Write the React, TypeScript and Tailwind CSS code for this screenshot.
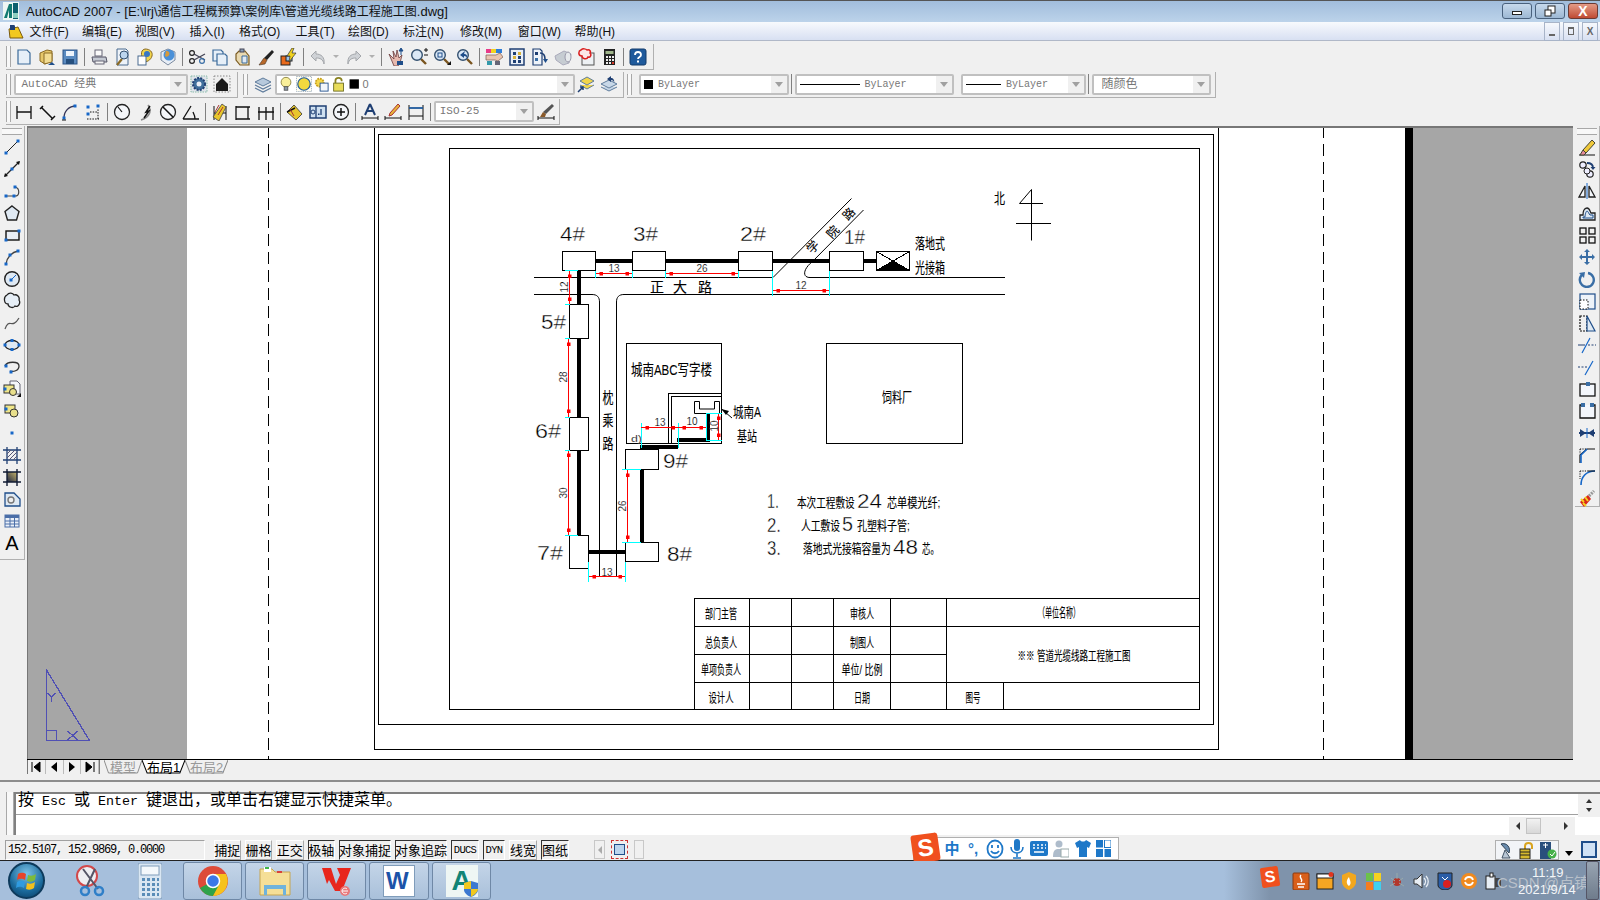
import React from "react";

type IconProps = { children: React.ReactNode; size?: number };

const Ico = ({ children, size = 18 }: IconProps) => (
  <svg width={size} height={size} viewBox="0 0 18 18" fill="none">
    {children}
  </svg>
);

const P = ({ x, y }: { x: number; y: number }) => (
  <rect x={x - 1.5} y={y - 1.5} width="3" height="3" fill="#1667c8" />
);

const NAVY = "#1f3f73";
const PALE = "#dfe9f3";

// left draw toolbar
const drawIcons: React.ReactNode[] = [
  <><path d="M3 15 15 3" stroke="#222" /><P x={3} y={15} /><P x={15} y={3} /></>,
  <><path d="M2 16 16 2" stroke="#222" strokeWidth="1.3" /><path d="M1 17l1-4 3 3zM17 1l-1 4-3-3z" fill="#111" /><P x={9} y={9} /></>,
  <><path d="M3 14h9c5 0 5-8 0-9" stroke="#444" strokeWidth="1.2" /><P x={3} y={14} /><P x={11} y={14} /><P x={12} y={5} /></>,
  <path d="M9 2l7 5.5-2.5 8.5h-9L2 7.5z" fill={PALE} stroke="#222" strokeWidth="1.4" />,
  <><rect x="3" y="5" width="13" height="9" fill="#e8eef6" stroke="#111" strokeWidth="1.4" /><P x={3} y={14} /><P x={16} y={5} /></>,
  <><path d="M3 16C4 9 9 4 15 3" stroke="#444" strokeWidth="1.3" /><P x={3} y={16} /><P x={15} y={3} /><P x={7} y={7} /></>,
  <><circle cx="9" cy="9" r="7.3" fill={PALE} stroke="#222" strokeWidth="1.4" /><path d="M9 9l4-4" stroke="#1667c8" /><P x={8} y={10} /></>,
  <path d="M4 3c2-3 6-2 7 0 3-1 6 2 5 5 2 3-1 8-4 6-2 3-7 1-7-2-4 0-5-7-1-9z" fill="#e6eef6" stroke="#222" strokeWidth="1.3" />,
  <path d="M2 15C6 3 9 16 16 4" stroke="#555" strokeWidth="1.2" />,
  <><ellipse cx="9" cy="9" rx="7" ry="4.5" fill={PALE} stroke="#222" strokeWidth="1.3" /><P x={9} y={4.5} /><P x={9} y={13.5} /><P x={2} y={9} /><P x={16} y={9} /></>,
  <><path d="M2 8C4 3 16 3 16 8c0 5-6 6-9 5" stroke="#333" strokeWidth="1.3" /><P x={3} y={8} /><P x={8} y={14} /></>,
  <><path d="M7 1h7l3 3v10H7z" fill="#f4f6fa" stroke="#667" /><rect x="1" y="5" width="10" height="8" fill="#efe68a" stroke="#333" /><circle cx="10" cy="12" r="3.5" fill="#e8df8c" stroke="#333" /><P x={2} y={9} /><path d="M14 17l4-4v4z" fill="#111" /></>,
  <><rect x="2" y="3" width="10" height="8" fill="#efe68a" stroke="#333" /><circle cx="11" cy="11" r="4" fill="#e8df8c" stroke="#333" /><P x={3} y={7} /></>,
  <rect x="7.5" y="7.5" width="3" height="3" fill="#1667c8" />,
  <><path d="M4 1v17M14 1v17M0 4h18M0 14h18" stroke={NAVY} strokeWidth="1.3" /><path d="M4 8l4-4M4 12l8-8M6 14l8-8M10 14l4-4" stroke="#557" /></>,
  <><defs><linearGradient id="g1" x1="0" y1="1" x2="1" y2="0"><stop stopColor="#1b2340" /><stop offset="1" stopColor="#c9b66a" /></linearGradient></defs><rect x="4" y="4" width="10" height="10" fill="url(#g1)" /><path d="M4 1v17M14 1v17M0 4h18M0 14h18" stroke="#111b33" strokeWidth="1.4" /></>,
  <><path d="M2 3h9l6 6v7H2z" fill={PALE} stroke="#1f4e8a" strokeWidth="1.3" /><circle cx="8" cy="10" r="3" fill="#eee" stroke="#777" strokeWidth="1.4" /></>,
  <><rect x="2" y="3" width="14" height="12" fill="#eaf0f9" stroke="#4a6ea8" /><rect x="2" y="3" width="14" height="3" fill="#4a6ea8" /><path d="M2 9h14M2 12h14M7 6v9M11.5 6v9" stroke="#4a6ea8" /></>,
  <span />,
];

// right modify toolbar
const modifyIcons: React.ReactNode[] = [
  <><path d="M1 17h16" stroke="#111" /><path d="M5 12 14 2l3 3-9 10z" fill="#f0c93a" stroke="#443" /><path d="M5 12l3 3-2 2H2z" fill="#e58a9a" stroke="#443" /></>,
  <><circle cx="5" cy="5" r="3.2" fill="#eef" stroke="#222" strokeWidth="1.2" /><circle cx="12" cy="14" r="3.2" fill="#eef" stroke="#222" strokeWidth="1.2" /><circle cx="9" cy="11" r="3" fill="#eef" stroke="#222" /><path d="M9 3c4 0 6 2 6 5" stroke={NAVY} strokeWidth="1.8" /><path d="M12.5 7l2.5 3 2.5-3z" fill={NAVY} /></>,
  <><path d="M9 1v16" stroke="#1667c8" /><path d="M7 4v11H1zM11 4v11h6z" fill="#f4f7fb" stroke="#222" strokeWidth="1.3" /></>,
  <><path d="M2 16V11h3c0-3 1-7 4-7s3 4 4 5h4v7z" fill={PALE} stroke="#222" strokeWidth="1.3" /><path d="M5 14v-1h2c0-2 1-6 2-6s2 3 3 4h3v3z" stroke="#1f4e8a" /></>,
  <><rect x="2" y="2" width="6" height="6" stroke="#111" strokeWidth="1.3" /><rect x="11" y="2" width="6" height="6" stroke="#111" strokeWidth="1.3" /><rect x="2" y="11" width="6" height="6" stroke="#111" strokeWidth="1.3" /><rect x="11" y="11" width="6" height="6" stroke="#111" strokeWidth="1.3" /></>,
  <path d="M9 1l3 3h-2v4h4V6l3 3-3 3v-2h-4v4h2l-3 3-3-3h2v-4H4v2L1 9l3-3v2h4V4H6z" fill="#3a6ea5" />,
  <><path d="M5 4a7 7 0 1 0 5-1" stroke="#3a6ea5" strokeWidth="2.4" /><path d="M1 3l6-1-1 6z" fill="#3a6ea5" /></>,
  <><rect x="2" y="2" width="15" height="15" fill="#eef3f9" stroke="#1f4e8a" strokeWidth="1.2" /><rect x="2" y="8" width="8" height="9" fill="#fff" stroke="#111" strokeDasharray="1.5 1.5" /></>,
  <><rect x="2" y="2" width="7" height="15" stroke="#111" strokeWidth="1.2" strokeDasharray="2 1" /><path d="M9 2l8 15H9z" fill={PALE} stroke="#1f4e8a" strokeWidth="1.2" /></>,
  <><path d="M4 17 12 2" stroke="#1667c8" strokeWidth="1.2" /><path d="M0 9h7" stroke={NAVY} /><path d="M10 9h8" stroke={NAVY} strokeDasharray="2 1.5" /></>,
  <><path d="M7 17 15 3" stroke="#1667c8" strokeWidth="1.2" /><path d="M0 9h10" stroke={NAVY} strokeDasharray="2 1.5" /></>,
  <><rect x="2" y="4" width="15" height="12" fill="#f3f6fb" stroke="#111" strokeWidth="1.3" /><rect x="8" y="2" width="4" height="4" fill="#3a6ea5" /></>,
  <><path d="M5 3H2v13h15V3h-3" fill="#f3f6fb" stroke="#111" strokeWidth="1.3" /><rect x="3" y="1" width="4" height="4" fill="#3a6ea5" /><rect x="12" y="1" width="4" height="4" fill="#3a6ea5" /></>,
  <><path d="M1 9h16" stroke="#1f3f73" strokeWidth="2" /><path d="M2 5l6 4-6 4zM16 5l-6 4 6 4z" fill="#1f3f73" /><path d="M9 4v10" stroke="#1667c8" /></>,
  <><path d="M2 17V9l7-6h8" stroke="#111" strokeWidth="1.2" /><path d="M3 17V9l6-6" stroke="#1667c8" strokeWidth="1.6" /><path d="M2 3h6M2 3v5" stroke="#111" strokeDasharray="1.2 1.2" /></>,
  <><path d="M3 17C3 9 8 3 17 3" stroke="#1667c8" strokeWidth="1.6" /><path d="M2 3h8M2 3v8" stroke="#111" strokeDasharray="1.2 1.2" /><path d="M10 3h7" stroke="#111" /></>,
  <><path d="M10 5 2 12l4 5 7-8z" fill="#d9261c" /><path d="M3 9l3 3M7 7l3 4M5 13l3 3" stroke="#f5d020" strokeWidth="2" /><path d="M11 6l5-5" stroke="#999" strokeWidth="3" strokeDasharray="2 1" /></>,
];

const Mag = ({ children }: { children?: React.ReactNode }) => (
  <>
    <path d="M11 11l5 5" stroke="#7a5520" strokeWidth="2.4" />
    <circle cx="7" cy="7" r="5.3" fill="#dbe8f6" stroke="#33506f" strokeWidth="1.4" />
    {children}
  </>
);

const Dim = ({ children }: { children: React.ReactNode }) => (
  <g stroke="#111" strokeWidth="1.3">{children}</g>
);

const std: Record<string, React.ReactNode> = {
  qnew: <path d="M3 2h9l3 3v11H3z" fill="#e6eff8" stroke="#3b6a9a" strokeWidth="1.2" />,
  open: <><path d="M2 5l7-3 5 1v10l-7 3-5-3z" fill="#e6c76a" stroke="#8a6a25" /><path d="M6 5h8v9l-8 2z" fill="#f2dc92" stroke="#8a6a25" /><path d="M10 17l4-3 3 3z" fill="#1f4e8a" /></>,
  save: <><rect x="2" y="2" width="14" height="14" fill="#5b8bc0" stroke="#2c5588" /><rect x="5" y="3" width="8" height="5" fill="#eef4fb" /><rect x="5" y="11" width="8" height="5" fill="#26507f" /></>,
  print: <><rect x="5" y="2" width="7" height="6" fill="#fafafa" stroke="#667" /><path d="M2 9h14l1 5H3z" fill="#c4c9d2" stroke="#556" /><rect x="5" y="13" width="9" height="3" fill="#f4f4f4" stroke="#667" /></>,
  preview: <><path d="M4 1h9l2 2v14H4z" fill="#eef3f9" stroke="#4a6b8f" /><path d="M9 11l-5 6" stroke="#8a6a25" strokeWidth="2.2" /><circle cx="11" cy="7" r="4" fill="#bcd5ee" stroke="#33506f" /></>,
  publish: <><path d="M9 1c5 0 8 3 7 7s-6 7-8 5S3 2 9 1z" fill="#f1d54b" stroke="#8a6a25" /><rect x="2" y="8" width="8" height="9" fill="#fff" stroke="#4a6b8f" /><circle cx="11" cy="6" r="3" fill="#3877c2" /></>,
  dwf: <><path d="M2 4l7-3 7 3v8l-7 5-7-5z" fill="#e8eef6" stroke="#7a8aa0" /><circle cx="10" cy="7" r="5.5" fill="#4a90d8" /><path d="M7 3c3 0 4 2 3 4s-3 2-4 1z" fill="#d89a3a" /></>,
  cut: <><circle cx="4" cy="5" r="2.4" stroke="#222" strokeWidth="1.2" /><circle cx="4" cy="13" r="2.4" stroke="#222" strokeWidth="1.2" /><path d="M6 6l11 6M6 12l11-6" stroke="#445" strokeWidth="1.3" /><circle cx="14" cy="13" r="2.4" stroke="#3a6ea5" strokeWidth="1.2" /></>,
  copy: <><path d="M2 2h8l2 2v9H2z" fill="#e6eff8" stroke="#3b6a9a" strokeWidth="1.2" /><path d="M6 6h8l2 2v9H6z" fill="#e6eff8" stroke="#3b6a9a" strokeWidth="1.2" /></>,
  paste: <><path d="M5 3h6l4 5v9H6L2 12V6z" fill="#e9d9b0" stroke="#7a5a20" strokeWidth="1.2" /><rect x="6" y="1" width="4" height="3" fill="#8aa0b8" stroke="#445" /><path d="M8 8h5v7H8z" fill="#dfe9f3" stroke="#3b6a9a" /></>,
  match: <><path d="M15 2l2 2-7 8-3-2z" fill="#222" /><path d="M7 10l3 2-2 4-6 1c2-2 3-5 5-7z" fill="#b8682a" stroke="#432" strokeWidth=".6" /></>,
  block: <><rect x="1" y="8" width="9" height="9" fill="#e86a1c" stroke="#222" /><rect x="6" y="8" width="6" height="5" fill="#9cc3ea" stroke="#222" /><path d="M12 0 7 8h3l-1 6 7-9h-4l2-5z" fill="#f2d21e" stroke="#333" strokeWidth=".7" /></>,
  undo: <path d="M7 3 2 8l5 5v-3c4 0 7 1 8 6 1-7-3-10-8-10z" fill="#cfd2d6" stroke="#a4a7ab" />,
  redo: <path d="M11 3l5 5-5 5v-3c-4 0-7 1-8 6-1-7 3-10 8-10z" fill="#cfd2d6" stroke="#a4a7ab" />,
  pan: <><path d="M2 6l5 5-1-8 3 6 1-7 2 8 3-3-2 8-2 3H7z" fill="#e6b9ae" stroke="#6a3a3a" strokeWidth=".8" /><path d="M14 0l-2 3h4zM14 3v4" stroke="#1f4e8a" fill="#1f4e8a" /><rect x="10" y="13" width="6" height="4" fill="#1f4e8a" /></>,
  zoomr: <Mag><path d="M14 2h4M16 0v4M14 7h4" stroke="#111" /></Mag>,
  zoomw: <Mag><rect x="5" y="5" width="4" height="4" stroke="#1f4e8a" /><path d="M14 17l4-4v4z" fill="#111" /></Mag>,
  zoomp: <Mag><path d="M9 3 4 7l4 3V8c2 0 3 1 3 3 1-4-1-5-3-5z" fill="#1f4e8a" /></Mag>,
  props: <><path d="M1 1h5v4H1z" fill="#e83a8a" /><path d="M6 1h5v4H6z" fill="#f2d21e" /><path d="M11 1h6v4h-6z" fill="#2f7ed8" /><path d="M1 7h10l4-2 3 4-5 4-3-1H1z" fill="#e8c4b0" stroke="#7a5a50" strokeWidth=".7" /><rect x="2" y="13" width="5" height="4" fill="#39a" /><rect x="10" y="13" width="5" height="4" fill="#667" /></>,
  design: <><rect x="2" y="1" width="14" height="16" fill="#e9eff7" stroke={NAVY} strokeWidth="1.5" /><rect x="5" y="4" width="3" height="3" fill={NAVY} /><rect x="10" y="4" width="3" height="3" fill="#d9b43a" /><rect x="5" y="8" width="3" height="3" fill="#d9b43a" /><rect x="10" y="8" width="3" height="3" fill={NAVY} /><rect x="5" y="12" width="3" height="3" fill={NAVY} /><rect x="10" y="12" width="3" height="3" fill={NAVY} /></>,
  palette: <><path d="M2 1h7l2 2v14H2z" fill="#eef3f9" stroke={NAVY} strokeWidth="1.2" /><rect x="4" y="4" width="3" height="3" fill={NAVY} /><rect x="4" y="10" width="3" height="3" fill="#3a6ea5" /><path d="M9 5c4 0 5 3 5 6" stroke={NAVY} strokeWidth="1.6" /><path d="M12 11h5l-2.5 4z" fill="#1f4e8a" /></>,
  sheet: <><path d="M1 8l9-5 7 3-2 9-6 2-7-5z" fill="#c6ccd2" stroke="#aab" /><ellipse cx="14" cy="9" rx="3" ry="5" fill="#e6e9ec" stroke="#99a" /></>,
  markup: <><rect x="5" y="5" width="12" height="12" fill="#eef1f4" stroke="#555" /><path d="M4 2c2-2 5-1 6 0 3-1 4 2 3 3 2 2 0 5-2 4-1 3-6 2-6-1-4 0-4-5-1-6z" fill="#fbe7e7" stroke="#d92020" strokeWidth="1.5" /></>,
  calc: <><rect x="4" y="1" width="11" height="16" fill="#222" /><rect x="5.5" y="3" width="8" height="3" fill="#9fb58a" /><path d="M6 8h2v2H6zM9 8h2v2H9zM12 8h2v2h-2zM6 11h2v2H6zM9 11h2v2H9zM12 11h2v2h-2zM6 14h2v2H6zM9 14h2v2H9z" fill="#eee" /><rect x="12" y="14" width="2" height="2" fill="#d63a2a" /></>,
  help: <><rect x="1" y="1" width="16" height="16" rx="2" fill="#1f5a9c" stroke="#123a6b" /><path d="M6 7c0-4 6-4 6 0 0 2-3 2-3 4" stroke="#fff" strokeWidth="1.8" /><rect x="8" y="12.5" width="2" height="2" fill="#fff" /></>,
  gear: <><rect x="1" y="1" width="16" height="16" fill="#e0e4ea" stroke="#8ba" strokeDasharray="1.5 1" /><circle cx="9" cy="9" r="6" fill="#3f6f9c" stroke="#1f3f73" strokeWidth="2" strokeDasharray="2 1.2" /><circle cx="9" cy="9" r="2.5" fill="#e8eef6" /></>,
  house: <><rect x="1" y="1" width="16" height="16" fill="#eee" stroke="#888" strokeDasharray="1.5 1.5" /><path d="M9 3l6 6v7H3V9z" fill="#1a1a1a" /></>,
  layers: <><path d="M1 7l8-4 8 4-8 4z" fill="#b7c9dc" stroke="#5f7c9c" /><path d="M1 10l8 4 8-4M1 13l8 4 8-4" stroke="#5f7c9c" strokeWidth="1.2" /></>,
  bulb: <><circle cx="9" cy="7" r="5.5" fill="#f8ef9a" stroke="#8b8240" /><rect x="7" y="12" width="4" height="4" fill="#8a9aa8" stroke="#555" /></>,
  sun: <><rect x="0.5" y="0.5" width="17" height="17" fill="#fffdf0" stroke="#9ab" strokeDasharray="1.5 1" /><circle cx="9" cy="9" r="7" fill="#f2d93e" stroke="#1f5a9c" strokeWidth="1.3" /></>,
  sun2: <><circle cx="7.5" cy="7.5" r="4.5" fill="#f6d84a" stroke="#c9a21c" strokeDasharray="2 1" strokeWidth="2" /><rect x="8" y="8" width="9" height="9" fill="#f2f6fb" stroke="#1f4e8a" /></>,
  lock: <><path d="M5 9V5c0-4 7-4 7 0v1" stroke="#8a8220" strokeWidth="2" /><rect x="3" y="8" width="11" height="9" fill="#e8dc5a" stroke="#6a6a20" /></>,
  blk: <rect x="2" y="3" width="12" height="12" fill="#000" />,
  layprev: <><path d="M3 6l7-4 7 4-7 4zM3 10l7 4 7-4" fill="#f1d54b" stroke="#5f7c9c" /><path d="M1 17l5-5M3 12h3v3" stroke={NAVY} strokeWidth="1.5" /></>,
  laymat: <><path d="M1 9l8-4 8 4-8 4zM1 12l8 4 8-4" fill="#c8d8e8" stroke="#5f7c9c" /><path d="M11 1 7 4l4 3V5c2 0 3 1 3 3 1-3-1-5-3-5z" fill="#1f3f73" /></>,
  dl: <Dim><path d="M2 3v13M16 3v13M2 9h14" /></Dim>,
  da: <Dim><path d="M2 6 5 3M13 17l4-4M4 5l10 10" strokeWidth="1.5" /></Dim>,
  darc: <><path d="M3 15C3 8 8 3 15 3" stroke="#335" strokeWidth="1.4" /><P x={3} y={15} /><P x={14} y={3} /><path d="M1 17h4" stroke="#111" /></>,
  dord: <><path d="M3 16h12M14 16V6M6 9h8" stroke="#111" strokeDasharray="1.5 1.2" /><P x={4} y={4} /><P x={14} y={3} /><P x={4} y={11} /></>,
  drad: <><circle cx="9" cy="9" r="7.5" fill="#f4f6f9" stroke="#222" strokeWidth="1.3" /><path d="M9 9 5 4" stroke="#111" strokeWidth="1.2" /></>,
  djog: <><path d="M5 17C14 14 16 8 12 2" stroke="#888" strokeWidth="1.5" /><path d="M14 3l-4 6 3-1-5 7" stroke="#111" strokeWidth="1.5" /></>,
  ddia: <><circle cx="9" cy="9" r="7.5" fill="#f4f6f9" stroke="#222" strokeWidth="1.3" /><path d="M4 4l10 10" stroke="#111" strokeWidth="1.5" /></>,
  dang: <Dim><path d="M1 16h16M1 16 9 3M13 16c0-3-1-5-2-7" /></Dim>,
  dqk: <><path d="M3 3v14M15 3v14" stroke="#111" /><path d="M3 10h12" stroke="#111" /><path d="M2 14l9-13 4 3-7 14z" fill="#e8c62c" stroke="#444" strokeWidth=".8" /><path d="M8 2 4 9M12 4l-5 8" stroke="#a33" /></>,
  dbase: <Dim><path d="M2 3v14M2 4h14M2 16h14M14 4v12" /></Dim>,
  dcont: <Dim><path d="M2 4v13M9 4v13M16 4v13M1 9h16" /></Dim>,
  dldr: <><path d="M1 9l9 8 6-6-8-9z" fill="#e8c62c" stroke="#333" strokeWidth=".8" /><path d="M1 9 9 5" stroke="#111" strokeWidth="1.5" /><path d="M4 6l4 7" stroke="#a33" /></>,
  dtol: <><rect x="1" y="3" width="16" height="12" fill="#cfe0f0" stroke={NAVY} strokeWidth="1.5" /><path d="M7 3v12M12 6v6" stroke={NAVY} strokeWidth="1.3" /><circle cx="4" cy="9" r="2" stroke={NAVY} /><rect x="9" y="10.5" width="1.5" height="1.5" fill={NAVY} /></>,
  dcen: <><circle cx="9" cy="9" r="7.5" fill="#f4f6f9" stroke="#222" strokeWidth="1.3" /><path d="M9 5v8M5 9h8" stroke="#111" strokeWidth="1.5" /></>,
  dtxt: <><path d="M9 1 4 12M9 1l5 11M6 8h6" stroke={NAVY} strokeWidth="2" /><path d="M1 13v4M17 13v4M1 15h16" stroke="#111" /></>,
  dedit: <><path d="M1 13v4M17 13v4M1 15h16" stroke="#111" /><path d="M14 1l2 2-8 9-3 1 1-3z" fill="#e8b43a" stroke="#a33" /></>,
  dupd: <><path d="M2 2v15M16 2v15" stroke="#111" /><path d="M2 5h14" stroke="#1f5a9c" strokeWidth="1.8" /><path d="M2 13h14" stroke="#111" /></>,
  dstyle: <><path d="M1 13v4M17 13v4M1 15h16" stroke="#111" /><path d="M15 1l2 2-8 8-3-2z" fill="#555" /><path d="M6 9l3 2-1 3H3z" fill="#8a5a2a" /></>,
};

const ToolBtn = ({ name }: { name: string }) => (
  <div className="flex h-full w-[23px] flex-none items-center justify-center">
    <Ico>{std[name]}</Ico>
  </div>
);

const Sep = () => (
  <div className="flex h-full w-[6px] flex-none items-center justify-center">
    <div className="h-[18px] w-px bg-[#808080]" />
  </div>
);

const Grip = ({ className = "" }: { className?: string }) => (
  <div className={`flex h-full flex-none items-center ${className}`}>
    <div className="h-[21px] w-[5px] border-x border-[#a8a8a8] bg-[#f8f8f8]" />
  </div>
);

const Caret = () => (
  <div className="ml-auto flex h-full w-[16px] flex-none items-center justify-center bg-[#f0f0f0]">
    <div className="h-0 w-0 border-x-[4px] border-t-[5px] border-x-transparent border-t-[#a0a0a0]" />
  </div>
);

const SmallCaret = () => (
  <div className="flex h-full w-[13px] flex-none items-center justify-center">
    <div className="h-0 w-0 border-x-[3px] border-t-[3px] border-x-transparent border-t-[#b0b0b0]" />
  </div>
);

const Combo = ({ className, children }: { className: string; children?: React.ReactNode }) => (
  <div className={`flex h-[21px] flex-none items-center overflow-hidden rounded-[2px] border-2 border-[#c0c0c0] bg-white text-[12px] text-[#777] ${className}`}>
    {children}
    <Caret />
  </div>
);

const Bar = ({ className, children }: { className: string; children: React.ReactNode }) => (
  <div className={`flex h-[26px] flex-none items-center border border-t-0 border-l-0 border-[#b0b0b0] ${className}`}>
    {children}
  </div>
);

const Cjk = ({ children }: { children: string }) => <span className="text-[12px]">{children}</span>;

const TitleBar = () => (
  <div className="relative flex h-[22px] flex-none items-center bg-gradient-to-b from-[#a0bcdb] to-[#bcd3ea]">
    <div className="absolute top-0 right-0 h-px w-[1190px] bg-[#555]" />
    <div className="absolute top-0 left-0 h-px w-[410px] bg-[#aaa]" />
    <svg width="16" height="18" viewBox="0 0 16 18" className="ml-[3px]">
      <rect width="16" height="18" fill="#eef6f4" />
      <path d="M1 16 6 2h3v14H6V8l-2 8z" fill="#127a70" />
      <path d="M10 1h5v16h-5z" fill="#0d5f6e" />
      <rect x="10" y="11" width="5" height="5" fill="#8ecfc0" />
    </svg>
    <div className="ml-[7px] text-[13px] leading-none whitespace-nowrap text-[#111]">
      AutoCAD 2007 - [E:\lrj\<Cjk>通信工程概预算</Cjk>\<Cjk>案例库</Cjk>\<Cjk>管道光缆线路工程施工图</Cjk>.dwg]
    </div>
    <div className="ml-auto flex items-center gap-[3px] pr-[2px]">
      <div className="flex h-[16px] w-[30px] items-center justify-center rounded-[3px] border border-[#49617d] bg-gradient-to-b from-[#c7d9ec] to-[#9db8d4]">
        <div className="mt-[4px] h-[4px] w-[10px] border border-[#222] bg-white" />
      </div>
      <div className="flex h-[16px] w-[30px] items-center justify-center rounded-[3px] border border-[#49617d] bg-gradient-to-b from-[#c7d9ec] to-[#9db8d4]">
        <svg width="12" height="12" viewBox="0 0 12 12">
          <rect x="4" y="1" width="7" height="7" fill="#fff" stroke="#222" />
          <rect x="1" y="5" width="6" height="6" fill="#fff" stroke="#222" />
        </svg>
      </div>
      <div className="flex h-[16px] w-[30px] items-center justify-center rounded-[3px] border border-[#6b3a33] bg-gradient-to-b from-[#e39a86] to-[#bf4a33] text-[14px] leading-none font-bold text-white">
        X
      </div>
    </div>
  </div>
);

const menus = [
  ["文件(F)", "w-[52.5px]"],
  ["编辑(E)", "w-[52.7px]"],
  ["视图(V)", "w-[54.7px]"],
  ["插入(I)", "w-[49.6px]"],
  ["格式(O)", "w-[56.5px]"],
  ["工具(T)", "w-[52.5px]"],
  ["绘图(D)", "w-[55px]"],
  ["标注(N)", "w-[57px]"],
  ["修改(M)", "w-[57.7px]"],
  ["窗口(W)", "w-[56.8px]"],
  ["帮助(H)", "w-[50px]"],
];

const MenuBar = () => (
  <div className="flex h-[19px] flex-none items-center border-b border-[#b0b8c8] bg-gradient-to-b from-[#f8fafd] to-[#d8e0f2]">
    <svg width="18" height="18" viewBox="0 0 18 18" className="ml-[7px]">
      <path d="M2 7l9-2 5 11H3z" fill="#f2c81e" stroke="#7a5a10" />
      <path d="M3 3h5v5H3z" fill="#1f3f73" />
      <circle cx="9" cy="3" r="1.5" fill="#fff" />
    </svg>
    <div className="mt-px ml-[4.5px] flex text-[12px] text-[#111]">
      {menus.map(([label, w]) => (
        <div key={label} className={w}>{label}</div>
      ))}
    </div>
    <div className="ml-auto flex h-full items-center gap-[3px] pr-[2px]">
      <div className="flex h-[19px] w-[16px] items-end justify-center border border-[#a8b4c8] pb-[4px]"><div className="h-[2px] w-[6px] bg-[#666]" /></div>
      <div className="flex h-[19px] w-[16px] items-center justify-center border border-[#a8b4c8]"><div className="h-[8px] w-[6px] border border-t-2 border-[#666]" /></div>
      <div className="flex h-[19px] w-[16px] items-center justify-center border border-[#a8b4c8] text-[10px] font-bold text-[#666]">X</div>
    </div>
  </div>
);

const Row1 = () => (
  <Bar className="ml-[6px] w-[647.5px]">
    <Grip className="w-[6.7px]" />
    {["qnew", "open", "save"].map((n) => <ToolBtn key={n} name={n} />)}
    <Sep />
    {["print", "preview", "publish", "dwf"].map((n) => <ToolBtn key={n} name={n} />)}
    <Sep />
    {["cut", "copy", "paste", "match", "block"].map((n) => <ToolBtn key={n} name={n} />)}
    <Sep />
    <ToolBtn name="undo" />
    <SmallCaret />
    <ToolBtn name="redo" />
    <SmallCaret />
    <Sep />
    {["pan", "zoomr", "zoomw", "zoomp"].map((n) => <ToolBtn key={n} name={n} />)}
    <Sep />
    {["props", "design", "palette", "sheet", "markup", "calc"].map((n) => <ToolBtn key={n} name={n} />)}
    <Sep />
    <ToolBtn name="help" />
  </Bar>
);

const LineSample = ({ w }: { w: string }) => <div className={`mr-[4px] ml-[3px] h-px flex-none bg-black ${w}`} />;

const Row2 = () => (
  <div className="mt-[1.5px] flex h-[26px] flex-none">
    <Bar className="ml-[6px] w-[232px]">
      <Grip className="w-[7.5px]" />
      <Combo className="w-[174px]">
        <span className="pl-[6px] font-[family-name:'Liberation_Mono','Noto_Sans_CJK_SC',monospace] text-[11px] whitespace-nowrap">AutoCAD 经典</span>
      </Combo>
      <ToolBtn name="gear" />
      <ToolBtn name="house" />
    </Bar>
    <Bar className="ml-[5px] w-[381px]">
      <Grip className="w-[8.5px]" />
      <ToolBtn name="layers" />
      <Combo className="w-[300px]">
        <div className="flex items-center pl-[1px]">
          {["bulb", "sun", "sun2", "lock"].map((n) => (
            <div key={n} className="flex w-[17.5px] justify-center"><Ico size={16}>{std[n]}</Ico></div>
          ))}
          <Ico size={14}>{std.blk}</Ico>
          <span className="ml-[1px] text-[11px]">0</span>
        </div>
      </Combo>
      <ToolBtn name="layprev" />
      <ToolBtn name="laymat" />
    </Bar>
    <Bar className="ml-[3px] w-[589px]">
      <Grip className="w-[12px]" />
      <Combo className="w-[149.5px]">
        <div className="ml-[3px] h-[9px] w-[9px] flex-none bg-black" />
        <span className="ml-[5px] font-[family-name:'Liberation_Mono',monospace] text-[10px]">ByLayer</span>
      </Combo>
      <div className="mx-[2.5px] h-[20px] w-px flex-none bg-[#808080]" />
      <Combo className="w-[159.5px]">
        <LineSample w="w-[60px]" />
        <span className="ml-[1px] font-[family-name:'Liberation_Mono',monospace] text-[10px]">ByLayer</span>
      </Combo>
      <div className="mx-[3px] h-[20px] w-px flex-none bg-transparent" />
      <Combo className="w-[124.5px]">
        <LineSample w="w-[35px]" />
        <span className="ml-[1px] font-[family-name:'Liberation_Mono',monospace] text-[10px]">ByLayer</span>
      </Combo>
      <div className="mx-[2.5px] h-[20px] w-px flex-none bg-[#808080]" />
      <Combo className="w-[119px]">
        <span className="pl-[8px] text-[12px]">随颜色</span>
      </Combo>
    </Bar>
  </div>
);

const Row3 = () => (
  <Bar className="mt-[1.5px] ml-[6px] w-[554px]">
    <Grip className="w-[6.7px]" />
    {["dl", "da", "darc", "dord"].map((n) => <ToolBtn key={n} name={n} />)}
    <Sep />
    {["drad", "djog", "ddia", "dang"].map((n) => <ToolBtn key={n} name={n} />)}
    <Sep />
    {["dqk", "dbase", "dcont"].map((n) => <ToolBtn key={n} name={n} />)}
    <Sep />
    {["dldr", "dtol", "dcen"].map((n) => <ToolBtn key={n} name={n} />)}
    <Sep />
    {["dtxt", "dedit", "dupd"].map((n) => <ToolBtn key={n} name={n} />)}
    <Sep />
    <Combo className="w-[100.5px]">
      <span className="pl-[4px] font-[family-name:'Liberation_Mono',monospace] text-[11px]">ISO-25</span>
    </Combo>
    <ToolBtn name="dstyle" />
  </Bar>
);

const SideBar = ({ icons, h, text }: { icons: React.ReactNode[]; h: string; text?: boolean }) => (
  <div className={`flex w-[25px] flex-none flex-col items-center border-r border-b border-[#b0b0b0] pt-[2px] ${h}`}>
    <div className="mb-[1px] h-[7px] w-[20px] flex-none border-y border-[#a8a8a8] bg-[#f8f8f8]" />
    {icons.map((ic, i) => (
      <div key={i} className="flex h-[22px] w-full flex-none items-center justify-center">
        {text && i === icons.length - 1 ? (
          <span className="text-[20px] leading-none text-black">A</span>
        ) : (
          <Ico>{ic}</Ico>
        )}
      </div>
    ))}
  </div>
);

type TP = {
  x: number;
  y: number;
  w?: number;
  sx?: number;
  s?: number;
  a?: "start" | "middle" | "end";
  rot?: number;
  thin?: boolean;
  children: string;
};

// narrow CAD lettering: glyphs get squeezed to the measured width (w) or by a
// horizontal factor (sx), a white stroke thins the big numerals
const T = ({ x, y, w, sx, s = 14, a = "start", rot, thin, children }: TP) => {
  let transform: string | undefined;
  if (sx !== undefined) transform = `translate(${x} ${y}) scale(${sx} 1)`;
  else if (rot !== undefined) transform = `rotate(${rot} ${x} ${y})`;
  return (
    <text
      x={sx !== undefined ? 0 : x}
      y={sx !== undefined ? 0 : y}
      fontSize={s}
      textAnchor={a}
      dominantBaseline="central"
      fill="#000"
      stroke={thin ? "#fff" : "#000"}
      strokeWidth={thin ? (s > 12 ? 0.35 : 0.15) : 0.1}
      textLength={w}
      lengthAdjust={w ? "spacingAndGlyphs" : undefined}
      transform={transform}
    >
      {children}
    </text>
  );
};

const boxes = [
  [562.5, 251.5, 33, 19],
  [632.5, 251.5, 33, 19],
  [738.5, 251.5, 34, 19],
  [829.5, 251.5, 34, 19],
  [569.5, 304.5, 19, 34],
  [569.5, 417.5, 19, 33],
  [569.5, 535.5, 19, 33],
  [625.5, 542.5, 33, 19],
  [625.5, 449.5, 33, 20],
];

const cables = [
  [596, 259, 37, 4],
  [666, 259, 73, 4],
  [773, 259, 57, 4],
  [864, 259, 13, 4],
  [577, 271, 4, 34],
  [577, 339, 4, 79],
  [577, 451, 4, 85],
  [589, 550, 37, 4],
  [640, 470, 4, 73],
  [640, 445, 38, 4],
  [677, 438, 33, 4],
  [706, 413, 4, 29],
];

const reds = [
  "M596 273.5H632", "M666 273.5H738", "M773 290.5H829", "M569.5 271V304", "M568.5 339V417", "M568.5 451V535",
  "M627.5 470V542", "M589 576.5H625", "M641 427.5H706", "M718.5 414V440",
];

const ticks = [
  [601, 273.5], [627, 273.5], [671, 273.5], [733, 273.5], [778, 290.5], [824, 290.5],
  [569.5, 276], [569.5, 299], [568.5, 344], [568.5, 411], [568.5, 455], [568.5, 530],
  [627.5, 475], [627.5, 537], [594, 576.5], [620, 576.5], [647, 427.5], [673, 427.5], [684, 427.5], [701, 427.5],
  [718.5, 418], [718.5, 435],
];

const cyans = [
  "M595.5 271V278", "M632.5 271V278", "M665.5 271V278", "M738.5 271V278", "M772.5 271V296", "M829.5 271V296",
  "M565 270.5H578", "M565 304.5H570", "M565 338.5H570", "M565 417.5H570", "M565 450.5H570", "M565 535.5H578",
  "M622 469.5H641", "M622 542.5H641", "M588.5 562V582", "M625.5 562V582",
  "M641.5 423V448", "M678.5 423V448", "M706.5 413V440", "M706 413.5H722", "M706 440.5H722",
];

const Drawing = () => (
  <svg
    className="absolute top-[-2px] left-0"
    width="1546"
    height="634"
    viewBox="27 126 1546 634"
    fontFamily="'Liberation Sans','Noto Sans CJK SC',sans-serif"
  >
    <g stroke="#000" fill="none" shapeRendering="crispEdges">
      <path d="M268.5 126V759M1323.5 126V759" strokeDasharray="12 6" />
      <path d="M374.5 126V749.5H1218.5V126" />
      <rect x="378.5" y="134.5" width="835" height="590" />
      <rect x="449.5" y="148.5" width="750" height="561" />
      <path d="M694 598.5H1200M694 626.5H1200M694 654.5H946.5M694 682.5H1200" />
      <path d="M694 598V710M749.5 598V710M791.5 598V710M833.5 598V710M890.5 598V710M946.5 598V710M1003.5 682V710" />
      <rect x="876.5" y="251.5" width="33" height="19" />
      <path d="M876.5 251.5 909.5 270.5M909.5 251.5 876.5 270.5" />
      <rect x="826.5" y="343.5" width="136" height="100" />
      <rect x="626.5" y="343.5" width="95" height="100" />
      <path d="M668.5 443V393.5H721.5M671.5 443V396.5H721.5" />
    </g>
    <g stroke="#000" fill="none">
      <path d="M534 277.5H773M808.5 277.5H1005M534 294.5H592C597 294.5 599.5 297 599.5 302V576M1005 294.5H624C619 294.5 616.5 297 616.5 302V576" />
      <path d="M773 277.5 851.5 198.5M863.5 210 812.5 261.5C803 269 802 277.5 810 277.5" />
      <path d="M1031.5 189.5V240.5M1016 223.5H1051M1031.5 189.5 1019.5 203.5H1043" />
      <path d="M694.5 401.5V413.5H719.5V401.5H714.5V409H699.5V401.5Z" fill="#fff" />
      <path d="M721.5 409 732 418" />
    </g>
    <path d="M876.5 270.5 893 261 909.5 270.5Z" fill="#000" />
    <path d="M721.5 409 729 411 726 415Z" fill="#000" />
    {cables.map(([x, y, w, h], i) => (
      <rect key={i} x={x} y={y} width={w} height={h} fill="#000" shapeRendering="crispEdges" />
    ))}
    {boxes.map(([x, y, w, h], i) => (
      <rect key={i} x={x} y={y} width={w} height={h} fill="#fff" stroke="#000" shapeRendering="crispEdges" />
    ))}
    <path d={cyans.join(" ")} stroke="#00ffff" fill="none" shapeRendering="crispEdges" />
    <path d={reds.join(" ")} stroke="#ff0000" fill="none" shapeRendering="crispEdges" />
    {ticks.map(([x, y], i) => (
      <rect key={i} x={x - 1.5} y={y - 1.5} width="3.5" height="3.5" fill="#ff0000" />
    ))}

    {/* well numbers */}
    <T x={560} y={234} s={20} w={25} thin>4#</T>
    <T x={633} y={234} s={20} w={25} thin>3#</T>
    <T x={740} y={234} s={20} w={26} thin>2#</T>
    <T x={844} y={237} s={20} w={21} thin>1#</T>
    <T x={541} y={322} s={20} w={25} thin>5#</T>
    <T x={535} y={431} s={20} w={26} thin>6#</T>
    <T x={537} y={553} s={20} w={26} thin>7#</T>
    <T x={667} y={554} s={20} w={25} thin>8#</T>
    <T x={663} y={461} s={20} w={25} thin>9#</T>

    {/* dimensions */}
    <T x={614} y={268} s={10} a="middle" thin>13</T>
    <T x={702} y={268} s={10} a="middle" thin>26</T>
    <T x={801} y={285} s={10} a="middle" thin>12</T>
    <T x={564} y={287} s={10} a="middle" rot={-90} thin>12</T>
    <T x={563} y={377} s={10} a="middle" rot={-90} thin>28</T>
    <T x={563} y={493} s={10} a="middle" rot={-90} thin>30</T>
    <T x={622} y={506} s={10} a="middle" rot={-90} thin>26</T>
    <T x={607} y={572} s={10} a="middle" thin>13</T>
    <T x={660} y={422} s={10} a="middle" thin>13</T>
    <T x={692} y={421} s={10} a="middle" thin>10</T>
    <T x={714} y={426} s={10} a="middle" rot={-90} thin>10</T>
    <T x={631} y={439} s={9} w={11} thin>d)</T>

    {/* streets and buildings */}
    <T x={657} y={287} s={14} a="middle">正</T>
    <T x={680} y={287} s={14} a="middle">大</T>
    <T x={705} y={287} s={14} a="middle">路</T>
    <T x={608} y={397} s={15} a="middle" w={11}>枕</T>
    <T x={608} y={420} s={15} a="middle" w={11}>乘</T>
    <T x={608} y={443} s={15} a="middle" w={11}>路</T>
    <T x={813} y={247} s={12} a="middle" rot={-48}>学</T>
    <T x={833} y={232} s={12} a="middle" rot={-48}>院</T>
    <T x={849} y={214} s={12} a="middle" rot={-48}>路</T>
    <T x={915} y={243} s={15} w={30}>落地式</T>
    <T x={915} y={267} s={15} w={30}>光接箱</T>
    <T x={994} y={198} s={14} w={11}>北</T>
    <T x={631} y={369} s={15} w={81}>城南ABC写字楼</T>
    <T x={882} y={397} s={14} w={30}>饲料厂</T>
    <T x={733} y={412} s={14} w={28}>城南A</T>
    <T x={737} y={436} s={14} w={20}>基站</T>

    {/* notes */}
    <T x={767} y={501} s={20} w={12} thin>1.</T>
    <T x={797} y={502} s={13} sx={0.74}>本次工程敷设</T>
    <T x={857} y={501} s={20} w={25} thin>24</T>
    <T x={887} y={502} s={13} sx={0.78}>芯单模光纤;</T>
    <T x={767} y={525} s={20} w={14} thin>2.</T>
    <T x={801} y={525} s={13} sx={0.75}>人工敷设</T>
    <T x={842} y={524} s={20} w={11} thin>5</T>
    <T x={857} y={525} s={13} sx={0.77}>孔塑料子管;</T>
    <T x={767} y={548} s={20} w={14} thin>3.</T>
    <T x={803} y={548} s={13} sx={0.75}>落地式光接箱容量为</T>
    <T x={893} y={547} s={20} w={25} thin>48</T>
    <T x={922} y={548} s={13} sx={0.65}>芯。</T>

    {/* title block */}
    <T x={721} y={613} s={13} a="middle" w={32}>部门主管</T>
    <T x={721} y={642} s={13} a="middle" w={32}>总负责人</T>
    <T x={721} y={669} s={13} a="middle" w={40}>单项负责人</T>
    <T x={721} y={697} s={13} a="middle" w={25}>设计人</T>
    <T x={862} y={613} s={13} a="middle" w={24}>审核人</T>
    <T x={862} y={642} s={13} a="middle" w={24}>制图人</T>
    <T x={862} y={669} s={13} a="middle" w={41}>单位/ 比例</T>
    <T x={862} y={697} s={13} a="middle" w={16}>日期</T>
    <T x={1059} y={612} s={13} a="middle" w={42}>（单位名称）</T>
    <T x={1074} y={655} s={13} a="middle" w={113}>※※ 管道光缆线路工程施工图</T>
    <T x={973} y={697} s={13} a="middle" w={15}>图号</T>

    {/* ucs icon */}
    <g stroke="#5050b4" strokeWidth="1.3" fill="none" shapeRendering="crispEdges">
      <path d="M46.5 670V740.5H89.5Z" />
      <path d="M46.5 730.5H56.5V740.5" />
      <path d="M47 693 51.5 697 56 693M51.5 697V702" />
      <path d="M67.5 731 78 740M78 731 67.5 740" />
    </g>
  </svg>
);

const Canvas = () => (
  <div className="relative ml-[2px] flex h-[634px] w-[1546px] flex-none overflow-hidden border-t-2 border-b border-t-[#777] border-b-black">
    <div className="w-[160px] flex-none border-l border-[#777] bg-[#a6a6a6]" />
    <div className="w-[1218px] flex-none bg-white" />
    <div className="w-[8px] flex-none bg-black" />
    <div className="flex-1 bg-[#a6a6a6]" />
    <Drawing />
  </div>
);

const navGlyph = [
  <path d="M3 2v10M11 2 5 7l6 5z" stroke="#000" fill="#000" />,
  <path d="M10 2 4 7l6 5z" fill="#000" />,
  <path d="M4 2l6 5-6 5z" fill="#000" />,
  <path d="M11 2v10M3 2l6 5-6 5z" stroke="#000" fill="#000" />,
];

const Tab = ({ label, active, w }: { label: string; active?: boolean; w: string }) => (
  <div className={`relative flex h-[14px] flex-none items-center justify-center ${w}`}>
    <svg className="absolute inset-0 h-full w-full" viewBox="0 0 42 14" preserveAspectRatio="none">
      <path d="M0 0 5 13H37L42 0" fill={active ? "#fff" : "#f0f0f0"} stroke={active ? "#000" : "#888"} />
    </svg>
    <span className={`relative text-[13px] leading-none ${active ? "text-black" : "text-[#999]"}`}>{label}</span>
  </div>
);

const TabRow = () => (
  <div className="flex h-[14px] flex-none pl-[27px]">
    <div className="flex h-[14px] w-[73px] flex-none border-x border-[#777]">
      {navGlyph.map((g, i) => (
        <div key={i} className="flex flex-1 items-center justify-center border-r border-[#bbb]">
          <svg width="14" height="14" viewBox="0 0 14 14">{g}</svg>
        </div>
      ))}
    </div>
    <div className="ml-[4px] flex">
      <Tab label="模型" w="w-[38px]" />
      <Tab label="布局1" active w="w-[43px]" />
      <Tab label="布局2" w="w-[43px]" />
    </div>
  </div>
);

const Latin = ({ children }: { children: string }) => (
  <span className="font-[family-name:'Liberation_Mono',monospace] text-[13.33px]">{children}</span>
);

const CommandArea = () => (
  <div className="mt-[10px] flex h-[43px] flex-none">
    <div className="ml-[6px] h-full w-[8px] flex-none border-x border-[#a8a8a8] bg-[#f8f8f8]" />
    <div className="relative flex-1 border-t-2 border-l-2 border-[#808080] bg-white">
      <div className="h-[21px] border-b border-[#a0a0a0] pl-[2px] text-[16px] leading-[12px] whitespace-pre text-black">
        按<Latin> Esc </Latin>或<Latin> Enter </Latin>键退出，或单击右键显示快捷菜单。
      </div>
      <div className="absolute top-0 right-0 flex h-[23px] w-[22px] flex-col items-center justify-center gap-[5px] bg-[#f0f0f0]">
        <div className="h-0 w-0 border-x-[3.5px] border-b-[4px] border-x-transparent border-b-[#333]" />
        <div className="h-0 w-0 border-x-[3.5px] border-t-[4px] border-x-transparent border-t-[#333]" />
      </div>
      <div className="absolute right-[25px] bottom-0 flex h-[18px] w-[66px] items-center justify-between bg-[#f0f0f0] px-[7px]">
        <div className="h-0 w-0 border-y-[4px] border-r-[4px] border-y-transparent border-r-[#333]" />
        <div className="mr-[18px] h-[16px] w-[15px] border border-[#c4c4c4] bg-gradient-to-b from-[#f2f2f2] to-[#d8d8d8]" />
        <div className="h-0 w-0 border-y-[4px] border-l-[4px] border-y-transparent border-l-[#333]" />
      </div>
    </div>
  </div>
);

const statusBtns: [string, string, boolean][] = [
  ["捕捉", "w-[27.5px]", false],
  ["栅格", "w-[27px]", false],
  ["正交", "w-[27.5px]", false],
  ["极轴", "w-[27.5px]", true],
  ["对象捕捉", "w-[52px]", true],
  ["对象追踪", "w-[52px]", true],
  ["DUCS", "w-[28px]", true],
  ["DYN", "w-[22px]", true],
  ["线宽", "w-[28px]", false],
  ["图纸", "w-[28px]", true],
];

const ImeBar = () => (
  <div className="relative mt-[-3px] ml-[269px] flex h-[23px] w-[206px] flex-none items-center border border-[#b0b0b0] bg-white">
    <div className="absolute top-[-4px] left-[-2px] flex h-[28px] w-[27px] rotate-[-8deg] items-center justify-center rounded-[3px] bg-[#f0501e] text-[24px] leading-none font-bold text-white">S</div>
    <div className="ml-[28px] flex items-center text-[#1e78c8]">
      <span className="w-[20px] text-center text-[15px] leading-none font-bold">中</span>
      <span className="w-[22px] text-center text-[15px] leading-none font-bold">°,</span>
      <div className="flex w-[22px] justify-center">
        <svg width="18" height="20" viewBox="0 0 18 20" fill="none" stroke="#1e78c8" strokeWidth="1.8"><ellipse cx="9" cy="10" rx="7.5" ry="8.5" /><path d="M6 6v3M12 6v3M5 12c2 3 6 3 8 0" /></svg>
      </div>
      <div className="flex w-[22px] justify-center">
        <svg width="14" height="20" viewBox="0 0 14 20" fill="#1e78c8"><rect x="4" y="0" width="6" height="12" rx="3" /><path d="M1 8c0 8 12 8 12 0M7 14v4M3 19h8" stroke="#1e78c8" strokeWidth="1.6" fill="none" /></svg>
      </div>
      <div className="flex w-[22px] justify-center">
        <svg width="18" height="15" viewBox="0 0 18 15"><rect width="18" height="15" rx="2" fill="#1e78c8" /><path d="M3 4h2M7 4h2M11 4h2M15 4h1M3 7h2M7 7h2M11 7h2M15 7h1M4 11h10" stroke="#fff" strokeWidth="1.5" /></svg>
      </div>
      <div className="flex w-[22px] justify-center">
        <svg width="16" height="18" viewBox="0 0 16 18" fill="#aebccb"><circle cx="6" cy="4" r="3.5" /><path d="M0 17c0-7 2-8 6-8s5 2 5 8z" /><rect x="8" y="9" width="8" height="8" fill="#fff" stroke="#9aa" /></svg>
      </div>
      <div className="flex w-[21px] justify-center">
        <svg width="16" height="17" viewBox="0 0 16 17" fill="#1e78c8"><path d="M5 0 0 3l2 5 2-1v10h8V7l2 1 2-5-5-3c-1 2-5 2-6 0z" /></svg>
      </div>
      <div className="flex w-[20px] justify-center">
        <svg width="15" height="17" viewBox="0 0 15 17" fill="#1e78c8"><rect width="7" height="7.5" /><rect x="8.5" width="6.5" height="7.5" fill="#fff" stroke="#1e78c8" /><rect y="9" width="7" height="8" /><rect x="8.5" y="9" width="6.5" height="8" /></svg>
      </div>
    </div>
  </div>
);

const StatusBar = () => (
  <div className="mt-[2px] flex h-[24px] flex-none items-start border-b border-[#222] pt-[3px]">
    <div className="ml-[5px] flex h-[20px] w-[200px] flex-none items-center border border-t-[#a0a0a0] border-r-white border-b-white border-l-[#a0a0a0] pl-[2px] font-[family-name:'Liberation_Mono',monospace] text-[12px] tracking-[-1.2px] whitespace-nowrap text-black">
      152.5107, 152.9869, 0.0000
    </div>
    <div className="ml-[8.5px] flex gap-[4px]">
      {statusBtns.map(([label, w, on]) => (
        <div
          key={label}
          className={`flex h-[20px] flex-none items-center justify-center border text-[13px] leading-none whitespace-nowrap text-black ${w} ${
            on ? "border-t-[#333] border-r-white border-b-white border-l-[#333]" : "border-t-white border-r-[#aaa] border-b-[#aaa] border-l-white"
          }`}
        >
          {label === "DUCS" || label === "DYN" ? (
            <span className="font-[family-name:'Liberation_Mono',monospace] text-[10.5px] tracking-[-0.7px]">{label}</span>
          ) : (
            label
          )}
        </div>
      ))}
    </div>
    <div className="ml-[25px] flex h-[19px] w-[11px] flex-none items-center justify-center border border-[#c8c8c8]">
      <div className="h-0 w-0 border-y-[4px] border-r-[4px] border-y-transparent border-r-[#aaa]" />
    </div>
    <div className="ml-[6px] flex h-[19px] w-[17px] flex-none items-center justify-center border border-dashed border-[#c33]">
      <div className="h-[11px] w-[11px] border border-[#1f4e8a] bg-[#bcd5ee]" />
    </div>
    <div className="ml-[6px] h-[19px] w-[10px] flex-none border border-[#c8c8c8]" />
    <ImeBar />
    <div className="ml-[376px] flex h-[20px] w-[64px] flex-none items-center justify-around border border-[#b0b0b0] bg-[#f2f4f7]">
      <svg width="18" height="18" viewBox="0 0 18 18"><path d="M4 3c6-2 10 4 8 9L4 3z" fill="#6a8cae" stroke="#345" /><path d="M8 9 5 17h8z" fill="#b8c6d4" stroke="#456" /></svg>
      <svg width="18" height="18" viewBox="0 0 18 18"><path d="M7 8V5c0-4 7-4 7 0v3" stroke="#d9a41e" strokeWidth="2" fill="none" /><rect x="2" y="8" width="10" height="10" fill="#d6b92e" stroke="#222" /><path d="M2 11h10M2 14h10" stroke="#222" /></svg>
      <svg width="18" height="18" viewBox="0 0 18 18"><rect x="1" y="1" width="11" height="17" fill="#2a4f7c" /><path d="M4 4h5M6.5 2v5" stroke="#fff" /><circle cx="13" cy="13" r="4.5" fill="#46b048" /><path d="M11 13l2 2 3-4" stroke="#fff" fill="none" /></svg>
    </div>
    <div className="mt-[11px] ml-[6px] h-0 w-0 flex-none border-x-[4px] border-t-[5px] border-x-transparent border-t-black" />
    <div className="mt-[1px] ml-[8px] h-[17px] w-[16px] flex-none border-2 border-[#1f4e8a] bg-[#cfe1f5]" />
  </div>
);

const TaskBtn = ({ children, w = "w-[59px]" }: { children: React.ReactNode; w?: string }) => (
  <div className={`flex h-[38px] flex-none items-center justify-center rounded-[3px] border border-[#6f88a6] bg-gradient-to-b from-[#c4d5e8] to-[#a9c0da] ${w}`}>
    {children}
  </div>
);

const trayIcons: React.ReactNode[] = [
  <><rect x="1" y="1" width="16" height="17" rx="1" fill="#d95f1a" stroke="#8a3a10" /><path d="M5 12h8M6 15h6M9 3c-3 3 3 4 0 7" stroke="#fff" strokeWidth="1.3" fill="none" /></>,
  <><rect x="1" y="2" width="16" height="15" fill="#f6a623" stroke="#222" /><rect x="1" y="2" width="16" height="4" fill="#fff" stroke="#222" /><circle cx="15" cy="2.5" r="2.5" fill="#e0341e" /></>,
  <><path d="M9 0l7 3v7c0 4-4 7-7 8-3-1-7-4-7-8V3z" fill="#f2a71e" /><path d="M9 5c-3 3-3 7 0 9 3-3 1-5 0-9z" fill="#fff" /></>,
  <><rect x="2" y="1" width="7" height="8" fill="#6cc24a" /><rect x="10" y="1" width="7" height="8" fill="#f6d21e" /><rect x="2" y="10" width="7" height="8" fill="#f57c1f" /><rect x="10" y="10" width="7" height="8" fill="#3fd0ef" /></>,
  <><circle cx="9" cy="10" r="4" fill="#b2372c" /><path d="M2 14l5-3M16 14l-5-3M9 1v6M3 6l4 3M15 6l-4 3" stroke="#9aa" /></>,
  <><path d="M2 7h3l5-5v14l-5-4H2z" fill="#e8eef4" stroke="#333" /><path d="M12 6c2 2 2 5 0 7M14 4c3 3 3 8 0 11" stroke="#e8eef4" strokeWidth="1.3" fill="none" /></>,
  <><path d="M2 1h14v12c0 3-4 5-7 5s-7-2-7-5z" fill="#2a5ea8" stroke="#222" /><path d="M6 5l3 3 3-3" stroke="#fff" fill="none" /><circle cx="11" cy="12" r="4" fill="#d82020" /></>,
  <><circle cx="9" cy="9" r="8" fill="#f08a1e" /><path d="M5 8c1-4 7-4 8 0M13 10c-1 4-7 4-8 0" stroke="#fff" strokeWidth="1.8" fill="none" /></>,
  <><rect x="2" y="4" width="9" height="13" fill="#e8eef4" stroke="#222" /><rect x="6" y="1" width="3" height="4" fill="#fff" stroke="#222" /><rect x="11" y="6" width="6" height="9" fill="#444" /></>,
];

const Taskbar = () => (
  <div className="relative flex h-[39px] flex-none items-center bg-[linear-gradient(to_right,#a6bfdc_0,#a6bfdc_1224px,#7f93ab_1270px,#7f93ab_100%)]">
    <div className="ml-[8px] flex h-[37px] w-[37px] flex-none items-center justify-center rounded-full border-2 border-[#0d3a5c] bg-[radial-gradient(circle_at_50%_30%,#7cc3e8,#1a6a9c_60%,#0a3a60)]">
      <svg width="22" height="22" viewBox="0 0 22 22">
        <path d="M2 4c3-2 6-1 8 0l-1 6c-2-1-5-2-8 0z" fill="#e8442a" />
        <path d="M12 5c3 1 5 1 8-1l-1 6c-3 2-5 2-8 1z" fill="#7dbb3c" />
        <path d="M1 12c3-2 6-1 8 0l-1 6c-2-1-5-2-8 0z" fill="#2f9be0" />
        <path d="M11 13c3 1 5 1 8-1l-1 6c-3 2-5 2-8 1z" fill="#f2c01e" />
      </svg>
    </div>
    <div className="ml-[30px] flex w-[32px] flex-none justify-center">
      <svg width="30" height="33" viewBox="0 0 30 33" fill="none">
        <circle cx="11" cy="12" r="10" fill="#eeeef2" stroke="#d2484a" strokeWidth="2" />
        <path d="M7 5l15 20M19 5 10 24" stroke="#556" strokeWidth="2" />
        <circle cx="23" cy="27" r="4" stroke="#2f7fc8" strokeWidth="2.5" />
        <circle cx="9" cy="27" r="4" stroke="#2f7fc8" strokeWidth="2.5" />
      </svg>
    </div>
    <div className="ml-[31px] flex w-[24px] flex-none justify-center">
      <svg width="24" height="36" viewBox="0 0 24 36">
        <rect width="24" height="36" rx="2" fill="#d9e6f2" stroke="#7f9cba" />
        <rect x="3" y="3" width="18" height="9" fill="#f4f8fb" stroke="#7f9cba" />
        {[15, 20, 25, 30].map((y) => (
          <path key={y} d={`M4 ${y}h3v3H4zM9 ${y}h3v3H9zM14 ${y}h3v3h-3zM19 ${y}h2v3h-2z`} fill="#5a8db8" />
        ))}
      </svg>
    </div>
    <div className="ml-[21px] flex flex-none gap-[3px]">
      <TaskBtn>
        <svg width="30" height="30" viewBox="0 0 30 30">
          <circle cx="15" cy="15" r="15" fill="#dd4b39" />
          <path d="M15 15 2 22A15 15 0 0 0 15 30l8-13z" fill="#2fa24a" />
          <path d="M15 8h13A15 15 0 0 1 15 30l7-13z" fill="#f6c21c" />
          <circle cx="15" cy="15" r="6.5" fill="#3b78e7" stroke="#fff" strokeWidth="1.5" />
        </svg>
      </TaskBtn>
      <TaskBtn>
        <svg width="32" height="32" viewBox="0 0 32 32">
          <path d="M1 4h12l3 3h15v23H1z" fill="#f5df97" stroke="#c6a550" />
          <path d="M5 2h7v5H5z" fill="#fff" />
          <path d="M6 2h4v2H6z" fill="#43b649" />
          <path d="M18 6h5v2h-5z" fill="#d9413a" />
          <path d="M5 20h22v10h-3v-6H8v6H5z" fill="#6fb3dc" />
        </svg>
      </TaskBtn>
      <TaskBtn>
        <svg width="32" height="30" viewBox="0 0 32 30">
          <path d="M1 2h9l5 16 4-9-3-7h14l-9 23H14L8 14l-2 4z" fill="#e8261c" />
          <circle cx="24" cy="25" r="5" fill="#e9787a" />
          <path d="M21 25h6M26 27c-2 2-5 0-5-2s3-4 5-2" stroke="#fff" fill="none" />
        </svg>
      </TaskBtn>
      <TaskBtn w="w-[60px]">
        <div className="relative h-[32px] w-[32px] border border-[#7f9cba] bg-white">
          <span className="absolute top-[3px] left-[2px] text-[24px] leading-none font-bold text-[#1c53a8]">W</span>
        </div>
      </TaskBtn>
      <TaskBtn>
        <div className="relative flex h-[32px] w-[32px] items-center justify-center bg-[#eef6f4]">
          <span className="text-[28px] leading-none font-bold text-[#108476]">A</span>
          <svg className="absolute right-0 bottom-0" width="14" height="16" viewBox="0 0 14 16"><path d="M7 0l7 2v7c0 3-4 6-7 7-3-1-7-4-7-7V2z" fill="#3c78d0" /><path d="M7 0v8H0V2zM7 8h7c0 3-4 6-7 8z" fill="#f2c81e" /></svg>
        </div>
      </TaskBtn>
    </div>
    <div className="absolute top-[6px] left-[1261px] flex h-[20px] w-[18px] rotate-[-8deg] items-center justify-center rounded-[2px] bg-[#f0501e] text-[16px] leading-none font-bold text-white">S</div>
    <div className="absolute top-[11px] left-[1289px] flex">
      {trayIcons.map((ic, i) => (
        <div key={i} className="flex w-[24px] justify-center">
          <Ico>{ic}</Ico>
        </div>
      ))}
    </div>
    <div className="absolute top-[5px] left-[1532px] text-[13px] leading-none text-[#f4f6f8]">11:19</div>
    <div className="absolute top-[14px] left-[1497px] text-[15px] leading-none whitespace-nowrap text-[#b8c0ca]">CSDN @卢镇豪</div>
    <div className="absolute top-[22px] left-[1518px] text-[13px] leading-none text-[#f4f6f8]">2021/9/14</div>
    <div className="absolute top-0 right-[1px] h-[39px] w-[13px] rounded-[2px] border border-[#556] bg-gradient-to-b from-[#98a4b2] to-[#6f7c8c]" />
  </div>
);

export default function App() {
  return (
    <div className="flex h-[900px] w-[1600px] flex-col overflow-hidden bg-[#f0f0f0] font-[family-name:'Liberation_Sans','Noto_Sans_CJK_SC',sans-serif]">
      <TitleBar />
      <MenuBar />
      <div className="h-[3px] flex-none" />
      <Row1 />
      <Row2 />
      <Row3 />
      <div className="mt-px flex h-[634px] flex-none">
        <SideBar icons={drawIcons} h="h-[434px]" text />
        <Canvas />
        <div className="ml-[2px]">
          <SideBar icons={modifyIcons} h="h-[381px]" />
        </div>
      </div>
      <TabRow />
      <div className="mt-[6px] h-[2px] flex-none bg-[#8c8c8c]" />
      <CommandArea />
      <StatusBar />
      <Taskbar />
    </div>
  );
}
